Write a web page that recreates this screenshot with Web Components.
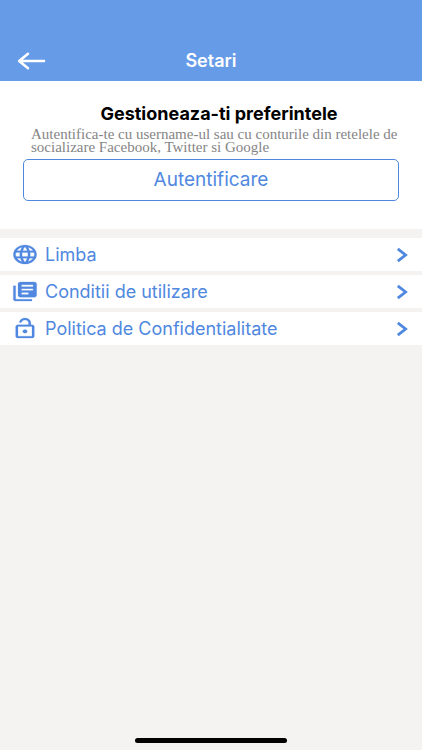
<!DOCTYPE html>
<html lang="ro">
<head>
<meta charset="utf-8">
<meta name="viewport" content="width=device-width, initial-scale=1">
<title>Setari</title>
<style>
html { height: 100%; }
body { margin: 0; min-height: 100%; display: flex; background: #f4f3f2; font-family: Inter, "Liberation Sans", sans-serif; --accent: #5088e0; --bar: #669be8; }
</style>
</head>
<body>
<settings-page>
  <page-header slot="header">Setari</page-header>
  <login-panel slot="login">
    <span slot="title">Gestioneaza-ti preferintele</span>
    <span slot="hint">Autentifica-te cu username-ul sau cu conturile din retelele de socializare Facebook, Twitter si Google</span>
    <span slot="action">Autentificare</span>
  </login-panel>
  <settings-row icon="globe">Limba</settings-row>
  <settings-row icon="library">Conditii de utilizare</settings-row>
  <settings-row icon="lock">Politica de Confidentialitate</settings-row>
</settings-page>
<script>
class BaseElement extends HTMLElement {
  constructor() {
    super();
    this.attachShadow({ mode: 'open' });
  }
  connectedCallback() {
    this.shadowRoot.innerHTML = this.render();
  }
}

customElements.define('settings-page', class extends BaseElement {
  render() {
    return `<style>
      :host { flex: 1; display: flex; flex-direction: column; min-width: 0; }
      nav { display: flex; flex-direction: column; gap: 4px; margin-top: 9px; }
      footer { margin-top: auto; padding: 16px 0 7px; display: flex; justify-content: center; }
      .home { width: 36%; height: 5px; border-radius: 3px; background: #000; }
    </style>
    <slot name="header"></slot>
    <main><slot name="login"></slot><nav><slot></slot></nav></main>
    <footer><div class="home"></div></footer>`;
  }
});

customElements.define('page-header', class extends BaseElement {
  render() {
    return `<style>
      :host { display: block; background: var(--bar); color: #fff; padding-top: 40px; }
      header { display: grid; grid-template-columns: 62px 1fr 62px; align-items: center; height: 41px; }
      button { border: 0; padding: 0 0 0 17px; background: none; color: inherit; height: 41px; text-align: left; }
      svg { display: block; }
      h1 { margin: 0; text-align: center; font-size: 18px; line-height: 20px; font-weight: 600; }
    </style>
    <header>
      <button type="button" aria-label="Inapoi"><svg width="29" height="20" viewBox="0 0 29 20" fill="none" stroke="currentColor" stroke-width="2.6" stroke-linecap="round" stroke-linejoin="round"><path d="M11 2.8 2.2 10 11 17.2M2.5 10H27"/></svg></button>
      <h1><slot></slot></h1>
    </header>`;
  }
});

customElements.define('login-panel', class extends BaseElement {
  render() {
    return `<style>
      :host { display: block; background: #fff; padding: 23px 23px 28px; }
      h2 { margin: 0; padding-left: 16px; text-align: center; color: #000; font-size: 18px; line-height: 20px; font-weight: 700; }
      p { margin: 4px 0 5px 8px; color: #858585; font: 15px/13px "Liberation Serif", serif; }
      button { display: block; width: 100%; height: 42px; border: 1px solid var(--accent); border-radius: 5px; background: #fff; color: var(--accent); font: 19px/22px Inter, "Liberation Sans", sans-serif; }
    </style>
    <h2><slot name="title"></slot></h2>
    <p><slot name="hint"></slot></p>
    <button type="button"><slot name="action"></slot></button>`;
  }
});

const ICONS = {
  globe: '<path d="M11.99 2C6.47 2 2 6.48 2 12s4.47 10 9.99 10C17.52 22 22 17.52 22 12S17.52 2 11.99 2zm6.93 6h-2.95c-.32-1.25-.78-2.45-1.38-3.56 1.84.63 3.37 1.91 4.33 3.56zM12 4.04c.83 1.2 1.48 2.53 1.91 3.96h-3.82c.43-1.43 1.08-2.76 1.91-3.96zM4.26 14C4.1 13.36 4 12.69 4 12s.1-1.36.26-2h3.38c-.08.66-.14 1.32-.14 2s.06 1.34.14 2H4.26zm.82 2h2.95c.32 1.25.78 2.45 1.38 3.56-1.84-.63-3.37-1.9-4.33-3.56zm2.95-8H5.08c.96-1.66 2.49-2.93 4.33-3.56C8.81 5.55 8.35 6.75 8.03 8zM12 19.96c-.83-1.2-1.48-2.53-1.91-3.96h3.82c-.43 1.43-1.08 2.76-1.91 3.96zM14.34 14H9.66c-.09-.66-.16-1.32-.16-2s.07-1.35.16-2h4.68c.09.65.16 1.32.16 2s-.07 1.34-.16 2zm.25 5.56c.6-1.11 1.06-2.31 1.38-3.56h2.95c-.96 1.65-2.49 2.93-4.33 3.56zM16.36 14c.08-.66.14-1.32.14-2s-.06-1.34-.14-2h3.38c.16.64.26 1.31.26 2s-.1 1.36-.26 2h-3.38z"/>',
  library: '<path d="M4 6H2v14c0 1.1.9 2 2 2h14v-2H4V6zm16-4H8c-1.1 0-2 .9-2 2v12c0 1.1.9 2 2 2h12c1.1 0 2-.9 2-2V4c0-1.1-.9-2-2-2zm-1 9H9V9h10v2zm-4 4H9v-2h6v2zm4-8H9V5h10v2z"/>',
  lock: '<circle cx="12" cy="15" r="1.9"/><path d="M18 8h-1V6c0-2.76-2.24-5-5-5-2.28 0-4.27 1.54-4.84 3.75-.14.54.18 1.08.72 1.22.53.14 1.08-.18 1.22-.72C9.44 3.93 10.63 3 12 3c1.65 0 3 1.35 3 3v2H6c-1.1 0-2 .9-2 2v10c0 1.1.9 2 2 2h12c1.1 0 2-.9 2-2V10c0-1.1-.9-2-2-2zm0 12H6V10h12v10z"/>'
};

customElements.define('settings-row', class extends BaseElement {
  render() {
    return `<style>
      :host { display: block; background: #fff; }
      button { display: flex; align-items: center; width: 100%; height: 33px; border: 0; padding: 0 14px 0 11px; background: none; color: var(--accent); font: 18px/22px Inter, "Liberation Sans", sans-serif; text-align: left; }
      .label { flex: 1; padding-left: 6px; }
      svg { display: block; flex: none; }
    </style>
    <button type="button">
      <svg width="28" height="23" viewBox="0 0 24 24" preserveAspectRatio="none" fill="currentColor" stroke="currentColor" stroke-width=".2" aria-hidden="true">${ICONS[this.getAttribute('icon')]}</svg>
      <span class="label"><slot></slot></span>
      <svg width="12" height="16" viewBox="0 0 12 16" fill="none" stroke="currentColor" stroke-width="2.8" aria-hidden="true"><path d="M1.8 1.8 9.6 8 1.8 14.2"/></svg>
    </button>`;
  }
});
</script>
</body>
</html>
